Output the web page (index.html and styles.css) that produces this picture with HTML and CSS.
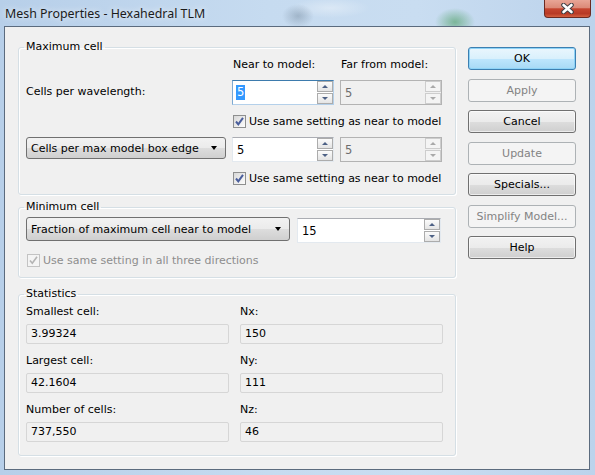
FILE: index.html
```html
<!DOCTYPE html>
<html lang="en">
<head>
    <meta charset="UTF-8">
    <title>Mesh Properties - Hexahedral TLM</title>
    <link rel="stylesheet" href="styles.css">
</head>
<body>
<div class="window">
    <div class="titlebar">
        <span class="title">Mesh Properties - Hexahedral TLM</span>
        <div class="close">
            <svg width="15" height="11" viewBox="0 0 15 11">
                <path d="M3.5 2 L11.5 9 M11.5 2 L3.5 9" stroke="#3f3f44" stroke-width="4.6" stroke-linecap="round"/>
                <path d="M3.5 2 L11.5 9 M11.5 2 L3.5 9" stroke="#fff" stroke-width="2.6" stroke-linecap="round"/>
            </svg>
        </div>
    </div>

    <div class="client">
        <div class="groups">
            <fieldset class="group group-max">
                <legend>Maximum cell</legend>
                <div class="max-grid">
                    <span></span>
                    <span class="head">Near to model:</span>
                    <span class="head">Far from model:</span>

                    <span class="label">Cells per wavelength:</span>
                    <div class="spin focused">
                        <span class="spin-value"><span class="selected">5</span></span>
                        <span class="spin-buttons"><span class="spin-up"></span><span class="spin-down"></span></span>
                    </div>
                    <div class="spin disabled">
                        <span class="spin-value">5</span>
                        <span class="spin-buttons"><span class="spin-up"></span><span class="spin-down"></span></span>
                    </div>

                    <span></span>
                    <div class="check wide">
                        <span class="box"><svg width="11" height="11" viewBox="0 0 11 11"><path d="M2 5.5 L4.3 8.3 L9 1.8" fill="none" stroke="#4a5e9c" stroke-width="2"/></svg></span>
                        Use same setting as near to model
                    </div>

                    <div class="combo"><span>Cells per max model box edge</span><span class="arrow"></span></div>
                    <div class="spin">
                        <span class="spin-value">5</span>
                        <span class="spin-buttons"><span class="spin-up"></span><span class="spin-down"></span></span>
                    </div>
                    <div class="spin disabled">
                        <span class="spin-value">5</span>
                        <span class="spin-buttons"><span class="spin-up"></span><span class="spin-down"></span></span>
                    </div>

                    <span></span>
                    <div class="check wide">
                        <span class="box"><svg width="11" height="11" viewBox="0 0 11 11"><path d="M2 5.5 L4.3 8.3 L9 1.8" fill="none" stroke="#4a5e9c" stroke-width="2"/></svg></span>
                        Use same setting as near to model
                    </div>
                </div>
            </fieldset>

            <fieldset class="group group-min">
                <legend>Minimum cell</legend>
                <div class="min-row">
                    <div class="combo combo-min"><span>Fraction of maximum cell near to model</span><span class="arrow"></span></div>
                    <div class="spin spin-min">
                        <span class="spin-value">15</span>
                        <span class="spin-buttons"><span class="spin-up"></span><span class="spin-down"></span></span>
                    </div>
                </div>
                <div class="check check-disabled">
                    <span class="box"><svg width="11" height="11" viewBox="0 0 11 11"><path d="M2 5.5 L4.3 8.3 L9 1.8" fill="none" stroke="#b4b4b4" stroke-width="1.6"/></svg></span>
                    Use same setting in all three directions
                </div>
            </fieldset>

            <fieldset class="group group-stats">
                <legend>Statistics</legend>
                <div class="stats-grid">
                    <span class="stat-label">Smallest cell:</span>
                    <span class="stat-label">Nx:</span>
                    <span class="stat-field">3.99324</span>
                    <span class="stat-field">150</span>
                    <span class="stat-label">Largest cell:</span>
                    <span class="stat-label">Ny:</span>
                    <span class="stat-field">42.1604</span>
                    <span class="stat-field">111</span>
                    <span class="stat-label">Number of cells:</span>
                    <span class="stat-label">Nz:</span>
                    <span class="stat-field">737,550</span>
                    <span class="stat-field">46</span>
                </div>
            </fieldset>
        </div>

        <div class="buttons">
            <button class="btn btn-default">OK</button>
            <button class="btn" disabled>Apply</button>
            <button class="btn">Cancel</button>
            <button class="btn" disabled>Update</button>
            <button class="btn">Specials...</button>
            <button class="btn" disabled>Simplify Model...</button>
            <button class="btn">Help</button>
        </div>
    </div>
</div>
</body>
</html>
```

FILE: styles.css
```css
body {
    margin: 0;
    font-family: "DejaVu Sans", Tahoma, sans-serif;
    font-size: 11px;
    color: #000;
}
.window {
    width: 595px;
    height: 475px;
    display: flex;
    flex-direction: column;
    background:
        radial-gradient(ellipse 20px 14px at 455px 22px, rgba(60, 150, 80, 0.55), transparent),
        radial-gradient(ellipse 16px 12px at 298px 16px, rgba(90, 110, 130, 0.35), transparent),
        radial-gradient(ellipse 40px 10px at 330px 8px, rgba(255, 255, 255, 0.35), transparent),
        linear-gradient(to right, #b7cfe9, #c6dbf0 45%, #c9ddf1 70%, #bcd3ec);
}
.titlebar {
    height: 26px;
    flex: none;
    display: flex;
    align-items: flex-start;
}
.title {
    font-family: "Noto Sans", "Open Sans", sans-serif;
    font-size: 12.4px;
    color: #1b1b1b;
    padding: 5px 0 0 5px;
    text-shadow: 0 0 6px rgba(255, 255, 255, 0.9);
}
.close {
    margin-left: auto;
    margin-right: 4px;
    width: 47px;
    height: 18px;
    box-sizing: border-box;
    border: 1px solid #6b2a22;
    border-top: none;
    border-radius: 0 0 4px 4px;
    background: linear-gradient(#e8a596 0%, #dc8a78 45%, #c5452f 52%, #b83a26 80%, #d4603f 100%);
    display: flex;
    align-items: center;
    justify-content: center;
}

.client {
    flex: 1;
    margin: 0 5px 5px 4px;
    border: 1px solid #5b6b7e;
    background: #f0f0f0;
    display: flex;
}
.groups {
    width: 438px;
    padding: 13px 0 0 13px;
}
.group {
    margin: 0;
    border: 1px solid #d5dfe5;
    border-radius: 3px;
    box-shadow: inset 1px 1px 0 #fff, 1px 1px 0 #fff;
    min-width: 0;
}
.group legend {
    padding: 0 2px;
    margin-left: -2px;
    line-height: 14px;
}
.group-max {
    padding: 4px 10px 8px 7px;
}
.group-min {
    margin-top: 5px;
    padding: 3px 10px 9px 7px;
}
.group-stats {
    margin-top: 9px;
    padding: 4px 10px 13px 7px;
}

.max-grid {
    display: grid;
    grid-template-columns: 200px 102px 102px;
    grid-template-rows: 14px 25px 16px 25px 16px;
    column-gap: 6px;
    row-gap: 8px;
    align-items: center;
}
.max-grid .head {
    line-height: 14px;
    padding-left: 1px;
}
.max-grid .label {
    margin-top: -2px;
}
.wide {
    grid-column: 2 / span 2;
}

/* spin box */
.spin {
    height: 25px;
    box-sizing: border-box;
    display: flex;
    border: 1px solid #e3e9ef;
    border-top-color: #abadb3;
    background: #fff;
}
.spin.focused {
    border-color: #b4d0ea;
    border-top-color: #3d7bad;
    border-left-color: #7eaad2;
}
.spin.disabled {
    border-color: #b3b3b3;
    background: #f0f0f0;
    color: #6d6d6d;
}
.spin-value {
    flex: 1;
    padding-left: 4px;
    display: flex;
    align-items: center;
    font-size: 11.5px;
}
.selected {
    background: #3399ff;
    color: #fff;
    line-height: 15px;
    padding: 0 1px;
    margin-left: -1px;
}
.spin-buttons {
    width: 16px;
    display: flex;
    flex-direction: column;
    gap: 1px;
}
.spin-up, .spin-down {
    flex: 1;
    box-sizing: border-box;
    border: 1px solid #acacac;
    background: linear-gradient(#fbfbfb, #e4e4e4);
    display: flex;
    align-items: center;
    justify-content: center;
}
.spin-up::after, .spin-down::after {
    content: "";
    border-left: 3px solid transparent;
    border-right: 3px solid transparent;
}
.spin-up::after {
    border-bottom: 3px solid #4d6185;
}
.spin-down::after {
    border-top: 3px solid #4d6185;
}
.spin.disabled .spin-up, .spin.disabled .spin-down {
    border-color: #cdcdcd;
    background: #f4f4f4;
}
.spin.disabled .spin-up::after {
    border-bottom-color: #a9a9a9;
}
.spin.disabled .spin-down::after {
    border-top-color: #a9a9a9;
}

/* checkbox */
.check {
    display: flex;
    align-items: center;
    height: 16px;
    padding-left: 1px;
}
.check .box {
    width: 13px;
    height: 13px;
    box-sizing: border-box;
    border: 1px solid #8e8f8f;
    background: linear-gradient(135deg, #d8d8d8, #fdfdfd);
    margin-right: 3px;
    display: flex;
    align-items: center;
    justify-content: center;
}
.check-disabled {
    color: #8d8d8d;
    margin-top: 9px;
}
.check-disabled .box {
    border-color: #c3c3c3;
    background: #f4f4f4;
}

/* drop down */
.combo {
    height: 22px;
    box-sizing: border-box;
    border: 1px solid #707070;
    border-radius: 3px;
    background: linear-gradient(#f2f2f2 0%, #ebebeb 50%, #dddddd 51%, #cfcfcf 100%);
    display: flex;
    align-items: center;
    justify-content: space-between;
    padding: 0 8px 0 4px;
    align-self: start;
}
.combo .arrow {
    border-left: 3.5px solid transparent;
    border-right: 3.5px solid transparent;
    border-top: 4px solid #000;
}
.min-row {
    display: flex;
    gap: 7px;
}
.combo-min {
    width: 264px;
    height: 24px;
}
.spin-min {
    width: 144px;
    margin-top: 1px;
}

/* statistics */
.stats-grid {
    display: grid;
    grid-template-columns: 203px 203px;
    column-gap: 11px;
}
.stat-label {
    line-height: 14px;
    margin-top: 10px;
}
.stat-label:nth-child(1), .stat-label:nth-child(2) {
    margin-top: 0;
}
.stat-field {
    height: 20px;
    box-sizing: border-box;
    margin-top: 5px;
    border: 1px solid #d6d6d6;
    border-radius: 2px;
    background: #f0f0f0;
    padding-left: 4px;
    line-height: 18px;
}

/* buttons */
.buttons {
    width: 108px;
    margin-left: 12px;
    padding-top: 20px;
    display: flex;
    flex-direction: column;
    gap: 8.5px;
}
.btn {
    height: 23px;
    font-family: "DejaVu Sans", Tahoma, sans-serif;
    font-size: 11px;
    color: #000;
    border: 1px solid #707070;
    border-radius: 3px;
    background: linear-gradient(#f2f2f2 0%, #ebebeb 50%, #dddddd 51%, #cfcfcf 100%);
    box-shadow: inset 0 0 0 1px rgba(255, 255, 255, 0.6);
    padding: 0;
}
.btn-default {
    border-color: #3c7fb1;
    background: linear-gradient(#eaf6fd 0%, #d9f0fc 50%, #bee6fd 51%, #a7d9f5 100%);
    box-shadow: inset 0 0 0 1px #8ed3f7;
}
.btn:disabled {
    border-color: #adb2b5;
    background: #f4f4f4;
    color: #838383;
    box-shadow: none;
}
```
